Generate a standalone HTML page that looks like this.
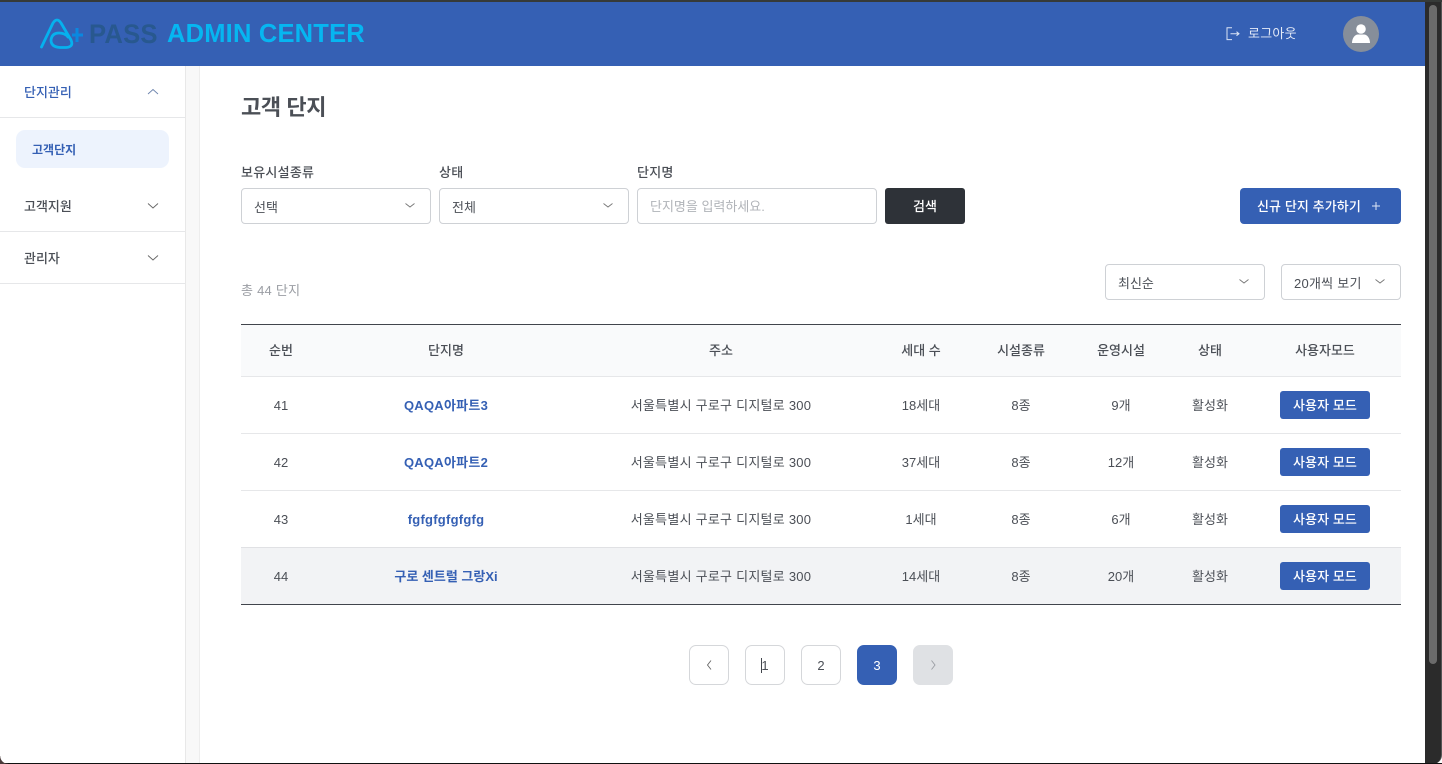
<!DOCTYPE html>
<html lang="ko"><head><meta charset="utf-8"><title>PASS ADMIN CENTER</title>
<style>
*{box-sizing:border-box;margin:0;padding:0}
html,body{width:1442px;height:764px;overflow:hidden;background:#fff}
body{position:relative;font-family:"Liberation Sans","Noto Sans CJK KR",sans-serif;font-size:13px;color:#4b4f56;letter-spacing:0}
.a{position:absolute;white-space:nowrap}
.t{position:absolute;white-space:nowrap;line-height:20px;height:20px;margin-top:1px}
.c{transform:translateX(-50%)}
.m{font-weight:500}
.l{letter-spacing:.25px}
.box{position:absolute;background:#fff;border:1px solid #ced1d5;border-radius:4px}
.rule{position:absolute;height:1px;background:#e6e7e9}
.blue{color:#3560b4}
.btn{position:absolute;left:1280px;width:90px;height:28px;background:#3560b4;border-radius:3px;color:#fff;text-align:center;line-height:29px;font-weight:500;font-size:13px;letter-spacing:.1px}
.pg{position:absolute;top:645px;width:40px;height:40px;border-radius:7px;border:1px solid #d5d7da;text-align:center;line-height:39px;font-size:13px;background:#fff}
svg{position:absolute;overflow:visible}
</style></head><body>
<div class="a" style="left:0;top:0;width:1442px;height:2px;background:#363a38"></div>
<div class="a" style="left:0;top:2px;width:1425px;height:64px;background:#3560b4"></div>

<svg style="left:40px;top:18px" width="44" height="32" viewBox="0 0 44 32" fill="none">
<path d="M1.500 29L13 5Q17 -1 21 5L31 22Q34 29 26 29.500L20 29.500Q11 29 11 22Q12 15 19 15Q25 15 28 19" stroke="#06b1ee" stroke-width="2.800" stroke-linecap="round" stroke-linejoin="round"/>
<path d="M32 17H43M37 10V24" stroke="#0a88e0" stroke-width="3"/>
</svg>
<div class="a" style="left:89px;top:16px;font-size:27px;line-height:36px;font-weight:700;color:#28588f;letter-spacing:.2px;transform-origin:left;transform:scaleX(.95)">PASS</div>
<div class="a" style="left:167px;top:16px;font-size:25.500px;line-height:36px;font-weight:700;color:#06b6f1;letter-spacing:.2px">ADMIN CENTER</div>

<svg style="left:1226px;top:27px" width="14" height="14" viewBox="0 0 14 14" fill="none" stroke="#dbe4f5" stroke-width="1"><path d="M6 .8H1V12.600H6M4.500 6.700H13M10.500 4.700L13 6.700L10.500 8.700"/></svg>
<div class="t l" style="left:1248px;top:23px;color:#e4eaf7">로그아웃</div>
<div class="a" style="left:1343px;top:16px;width:36px;height:36px;border-radius:50%;background:#868e9a"></div>
<svg style="left:1343px;top:16px" width="36" height="36" viewBox="0 0 36 36" fill="#fff"><circle cx="18" cy="13" r="4.800"/><path d="M9 27c0-5 3-8.500 6-8.500h6c3 0 6 3.500 6 8.500z"/></svg>

<div class="a" style="left:1425px;top:2px;width:17px;height:762px;background:#2b2b2b;border-right:1px solid #555;border-bottom-right-radius:9px"></div>
<div class="a" style="left:1429px;top:5px;width:8px;height:659px;background:#6b6b6b;border-radius:4px"></div>

<div class="a" style="left:185px;top:66px;width:15px;height:698px;background:#f8f8f8;border-left:1px solid #e8e8e8;border-right:1px solid #ededed"></div>

<div class="t m blue" style="left:24px;top:82px">단지관리</div>
<svg style="left:147px;top:88px" width="12" height="8" viewBox="0 0 12 8" fill="none" stroke="#6d84ad" stroke-width=".9"><path d="M1 6L6 1.500L11 6"/></svg>
<div class="rule" style="left:0;top:117px;width:185px"></div>
<div class="a" style="left:16px;top:130px;width:153px;height:38px;background:#edf3fd;border-radius:9px"></div>
<div class="t m" style="left:32px;top:139px;color:#3560b4;font-size:12px;font-weight:700">고객단지</div>
<div class="t m" style="left:24px;top:196px">고객지원</div>
<svg style="left:147px;top:202px" width="12" height="8" viewBox="0 0 12 8" fill="none" stroke="#666" stroke-width=".9"><path d="M1 1.500L6 6L11 1.500"/></svg>
<div class="rule" style="left:0;top:231px;width:185px"></div>
<div class="t m" style="left:24px;top:248px">관리자</div>
<svg style="left:147px;top:254px" width="12" height="8" viewBox="0 0 12 8" fill="none" stroke="#666" stroke-width=".9"><path d="M1 1.500L6 6L11 1.500"/></svg>
<div class="rule" style="left:0;top:283px;width:185px"></div>

<div class="a" style="left:241px;top:92px;font-size:22px;line-height:32px;font-weight:700;color:#4b4f56;letter-spacing:-.4px">고객 단지</div>

<div class="t m l" style="left:241px;top:162px">보유시설종류</div>
<div class="t m l" style="left:439px;top:162px">상태</div>
<div class="t m l" style="left:637px;top:162px">단지명</div>

<div class="box" style="left:241px;top:188px;width:190px;height:36px"></div>
<div class="t" style="left:254px;top:197px">선택</div>
<svg style="left:404px;top:202px" width="12" height="7" viewBox="0 0 12 7" fill="none" stroke="#777" stroke-width=".9"><path d="M1.500 1.500L6 5L10.500 1.500"/></svg>
<div class="box" style="left:439px;top:188px;width:190px;height:36px"></div>
<div class="t" style="left:452px;top:197px">전체</div>
<svg style="left:602px;top:202px" width="12" height="7" viewBox="0 0 12 7" fill="none" stroke="#777" stroke-width=".9"><path d="M1.500 1.500L6 5L10.500 1.500"/></svg>
<div class="box" style="left:637px;top:188px;width:240px;height:36px"></div>
<div class="t" style="left:650px;top:196px;color:#b0b3b8;font-size:13px">단지명을 입력하세요.</div>
<div class="a m" style="left:885px;top:188px;width:80px;height:36px;border-radius:3px;background:#2e3238;color:#fff;text-align:center;line-height:37px">검색</div>
<div class="a m" style="left:1240px;top:188px;width:161px;height:36px;border-radius:4px;background:#3560b4"></div>
<div class="t m" style="left:1257px;top:196px;color:#fff;letter-spacing:.1px">신규 단지 추가하기</div>
<svg style="left:1372px;top:202px" width="8" height="8" viewBox="0 0 8 8" fill="none" stroke="#dfe7f6" stroke-width="1"><path d="M0 4H8M4 0V8"/></svg>

<div class="t l" style="left:241px;top:280px;color:#9a9da3">총 44 단지</div>
<div class="box" style="left:1105px;top:264px;width:160px;height:36px"></div>
<div class="t" style="left:1118px;top:273px">최신순</div>
<svg style="left:1238px;top:278px" width="12" height="7" viewBox="0 0 12 7" fill="none" stroke="#777" stroke-width=".9"><path d="M1.500 1.500L6 5L10.500 1.500"/></svg>
<div class="box" style="left:1281px;top:264px;width:120px;height:36px"></div>
<div class="t l" style="left:1294px;top:273px">20개씩 보기</div>
<svg style="left:1374px;top:278px" width="12" height="7" viewBox="0 0 12 7" fill="none" stroke="#777" stroke-width=".9"><path d="M1.500 1.500L6 5L10.500 1.500"/></svg>

<div class="a" style="left:241px;top:324px;width:1160px;height:1px;background:#41454c"></div>
<div class="a" style="left:241px;top:325px;width:1160px;height:51px;background:#f9fafb"></div>
<div class="rule" style="left:241px;top:376px;width:1160px"></div>
<div class="rule" style="left:241px;top:433px;width:1160px"></div>
<div class="rule" style="left:241px;top:490px;width:1160px"></div>
<div class="a" style="left:241px;top:547px;width:1160px;height:57px;background:#f2f3f5;border-top:1px solid #e0e1e4"></div>
<div class="a" style="left:241px;top:604px;width:1160px;height:1px;background:#41454c"></div>

<div class="t m c" style="left:281px;top:340px">순번</div>
<div class="t m c" style="left:446px;top:340px">단지명</div>
<div class="t m c" style="left:721px;top:340px">주소</div>
<div class="t m c" style="left:921px;top:340px">세대 수</div>
<div class="t m c" style="left:1021px;top:340px">시설종류</div>
<div class="t m c" style="left:1121px;top:340px">운영시설</div>
<div class="t m c" style="left:1210px;top:340px">상태</div>
<div class="t m c" style="left:1325px;top:340px">사용자모드</div>

<div class="t c" style="left:281px;top:395px">41</div>
<div class="t c blue l" style="left:446px;top:395px;font-weight:700">QAQA아파트3</div>
<div class="t c l" style="left:721px;top:395px">서울특별시 구로구 디지털로 300</div>
<div class="t c" style="left:921px;top:395px">18세대</div>
<div class="t c" style="left:1021px;top:395px">8종</div>
<div class="t c" style="left:1121px;top:395px">9개</div>
<div class="t c" style="left:1210px;top:395px">활성화</div>
<div class="btn" style="top:391px">사용자 모드</div>

<div class="t c" style="left:281px;top:452px">42</div>
<div class="t c blue l" style="left:446px;top:452px;font-weight:700">QAQA아파트2</div>
<div class="t c l" style="left:721px;top:452px">서울특별시 구로구 디지털로 300</div>
<div class="t c" style="left:921px;top:452px">37세대</div>
<div class="t c" style="left:1021px;top:452px">8종</div>
<div class="t c" style="left:1121px;top:452px">12개</div>
<div class="t c" style="left:1210px;top:452px">활성화</div>
<div class="btn" style="top:448px">사용자 모드</div>

<div class="t c" style="left:281px;top:509px">43</div>
<div class="t c blue l" style="left:446px;top:509px;font-weight:700">fgfgfgfgfgfg</div>
<div class="t c l" style="left:721px;top:509px">서울특별시 구로구 디지털로 300</div>
<div class="t c" style="left:921px;top:509px">1세대</div>
<div class="t c" style="left:1021px;top:509px">8종</div>
<div class="t c" style="left:1121px;top:509px">6개</div>
<div class="t c" style="left:1210px;top:509px">활성화</div>
<div class="btn" style="top:505px">사용자 모드</div>

<div class="t c" style="left:281px;top:566px">44</div>
<div class="t c blue" style="left:446px;top:566px;font-weight:700">구로 센트럴 그랑Xi</div>
<div class="t c l" style="left:721px;top:566px">서울특별시 구로구 디지털로 300</div>
<div class="t c" style="left:921px;top:566px">14세대</div>
<div class="t c" style="left:1021px;top:566px">8종</div>
<div class="t c" style="left:1121px;top:566px">20개</div>
<div class="t c" style="left:1210px;top:566px">활성화</div>
<div class="btn" style="top:562px">사용자 모드</div>

<div class="pg" style="left:689px"></div>
<svg style="left:706px;top:660px" width="7" height="10" viewBox="0 0 7 10" fill="none" stroke="#666" stroke-width=".9"><path d="M5 .5L1.500 5L5 9.500"/></svg>
<div class="pg" style="left:745px">1</div>
<div class="a" style="left:761px;top:658px;width:1px;height:15px;background:#41454c"></div>
<div class="pg" style="left:801px">2</div>
<div class="pg" style="left:857px;background:#3560b4;border-color:#3560b4;color:#fff">3</div>
<div class="pg" style="left:913px;background:#dfe1e4;border-color:#dfe1e4"></div>
<svg style="left:930px;top:660px" width="7" height="10" viewBox="0 0 7 10" fill="none" stroke="#9a9da3" stroke-width=".9"><path d="M1.500 .5L5 5L1.500 9.500"/></svg>

<div class="a" style="left:0;top:763px;width:1442px;height:1px;background:#111"></div>
<div class="a" style="left:0;top:756px;width:8px;height:8px;background:radial-gradient(circle at 8px 0,transparent 7.500px,#4a3a3a 8px)"></div>
</body></html>
